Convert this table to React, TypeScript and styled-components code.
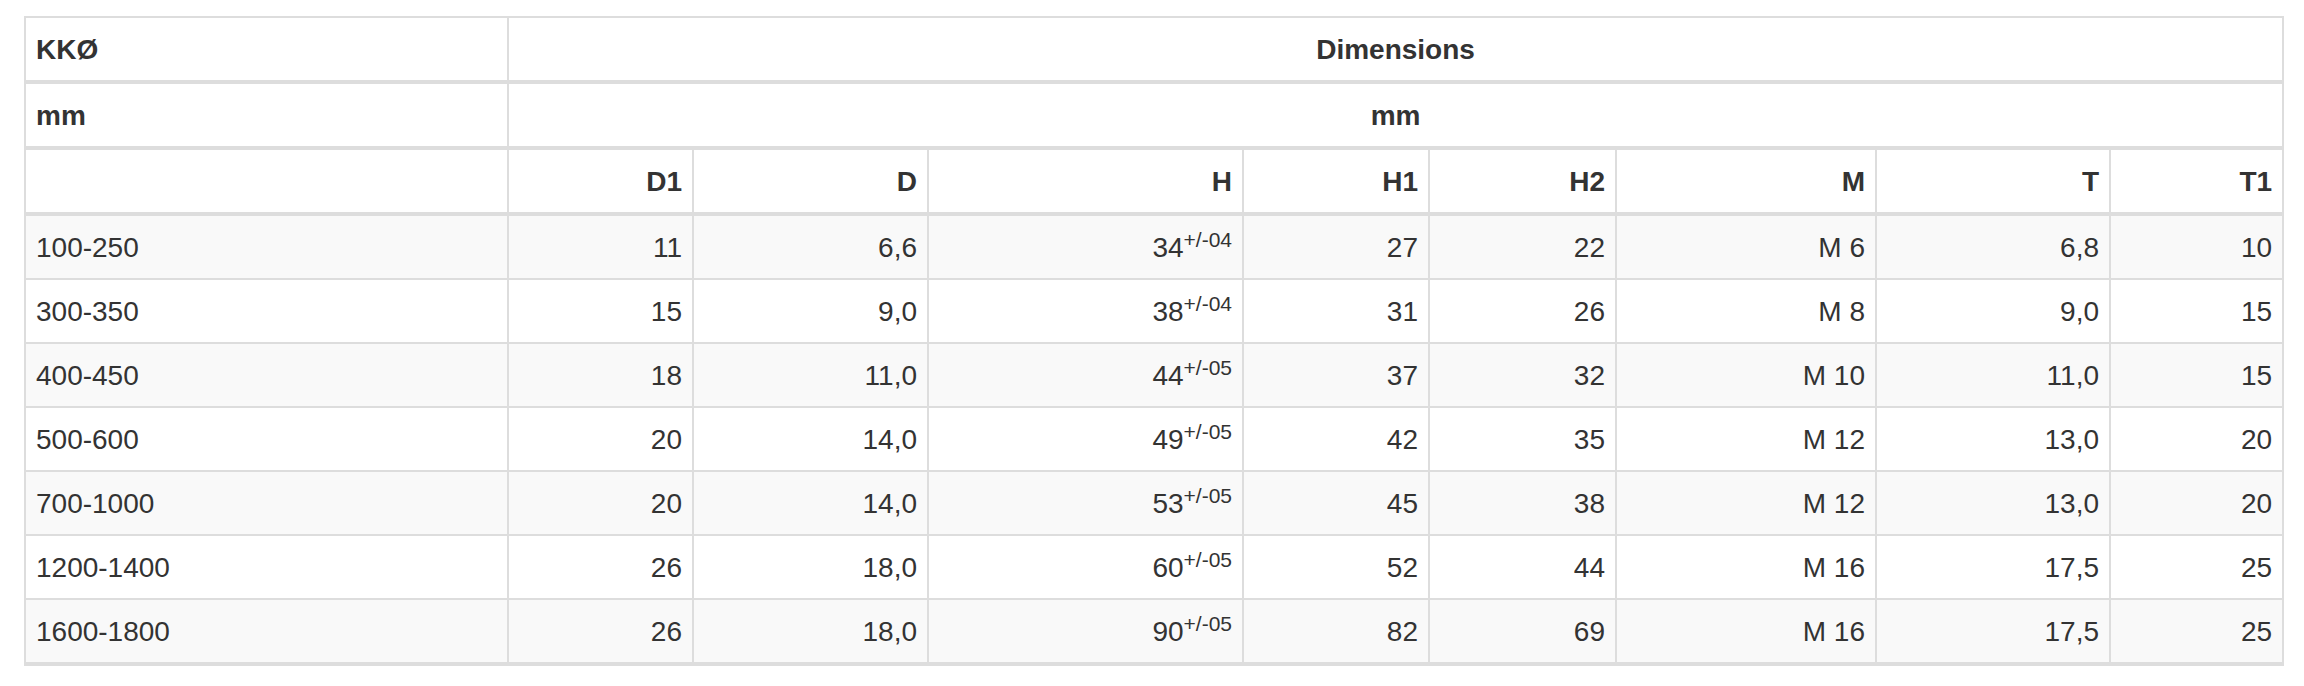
import React from 'react';
import styled, { createGlobalStyle } from 'styled-components';

const GlobalStyle = createGlobalStyle`
  html, body { margin: 0; padding: 0; background: #ffffff; }
  body { font-family: "Liberation Sans", Arial, Helvetica, sans-serif; color: #333333; }
`;

const Page = styled.div`
  padding: 16px 0 0 24px;
`;

const Table = styled.table`
  table-layout: fixed;
  width: 2260px;
  border-collapse: separate;
  border-spacing: 0;
  border-left: 2px solid #dddddd;
  border-top: 2px solid #dddddd;
  font-size: 28px;
  line-height: 42px;
  color: #333333;
`;

type Align = 'left' | 'center' | 'right';

const HeadCell = styled.th<{ $align: Align }>`
  box-sizing: border-box;
  padding: 11px 10px 9px;
  font-weight: bold;
  text-align: ${(p) => p.$align};
  border-right: 2px solid #dddddd;
  border-bottom: 4px solid #dddddd;
  white-space: nowrap;
`;

const BodyRow = styled.tr<{ $striped: boolean }>`
  background: ${(p) => (p.$striped ? '#f9f9f9' : '#ffffff')};

  &:last-child > td {
    border-bottom-width: 4px;
  }
`;

const Cell = styled.td<{ $align: Align }>`
  box-sizing: border-box;
  padding: 11px 10px 9px;
  text-align: ${(p) => p.$align};
  border-right: 2px solid #dddddd;
  border-bottom: 2px solid #dddddd;
  white-space: nowrap;
`;

const Tol = styled.sup`
  font-size: 75%;
  line-height: 0;
  position: relative;
  vertical-align: baseline;
  top: -0.5em;
`;

const widths = [483, 185, 235, 315, 186, 187, 260, 234, 173];
const subHeads = ['D1', 'D', 'H', 'H1', 'H2', 'M', 'T', 'T1'];

type Row = {
  range: string;
  d1: string;
  d: string;
  h: string;
  tol: string;
  h1: string;
  h2: string;
  m: string;
  t: string;
  t1: string;
};

const rows: Row[] = [
  { range: '100-250', d1: '11', d: '6,6', h: '34', tol: '+/-04', h1: '27', h2: '22', m: 'M 6', t: '6,8', t1: '10' },
  { range: '300-350', d1: '15', d: '9,0', h: '38', tol: '+/-04', h1: '31', h2: '26', m: 'M 8', t: '9,0', t1: '15' },
  { range: '400-450', d1: '18', d: '11,0', h: '44', tol: '+/-05', h1: '37', h2: '32', m: 'M 10', t: '11,0', t1: '15' },
  { range: '500-600', d1: '20', d: '14,0', h: '49', tol: '+/-05', h1: '42', h2: '35', m: 'M 12', t: '13,0', t1: '20' },
  { range: '700-1000', d1: '20', d: '14,0', h: '53', tol: '+/-05', h1: '45', h2: '38', m: 'M 12', t: '13,0', t1: '20' },
  { range: '1200-1400', d1: '26', d: '18,0', h: '60', tol: '+/-05', h1: '52', h2: '44', m: 'M 16', t: '17,5', t1: '25' },
  { range: '1600-1800', d1: '26', d: '18,0', h: '90', tol: '+/-05', h1: '82', h2: '69', m: 'M 16', t: '17,5', t1: '25' },
];

export default function App() {
  return (
    <Page>
      <GlobalStyle />
      <Table>
        <colgroup>
          {widths.map((w, i) => (
            <col key={i} style={{ width: w }} />
          ))}
        </colgroup>
        <thead>
          <tr>
            <HeadCell $align="left">KKØ</HeadCell>
            <HeadCell $align="center" colSpan={8}>Dimensions</HeadCell>
          </tr>
          <tr>
            <HeadCell $align="left">mm</HeadCell>
            <HeadCell $align="center" colSpan={8}>mm</HeadCell>
          </tr>
          <tr>
            <HeadCell $align="left" />
            {subHeads.map((h) => (
              <HeadCell key={h} $align="right">{h}</HeadCell>
            ))}
          </tr>
        </thead>
        <tbody>
          {rows.map((r, i) => (
            <BodyRow key={r.range} $striped={i % 2 === 0}>
              <Cell $align="left">{r.range}</Cell>
              <Cell $align="right">{r.d1}</Cell>
              <Cell $align="right">{r.d}</Cell>
              <Cell $align="right">
                {r.h}
                <Tol>{r.tol}</Tol>
              </Cell>
              <Cell $align="right">{r.h1}</Cell>
              <Cell $align="right">{r.h2}</Cell>
              <Cell $align="right">{r.m}</Cell>
              <Cell $align="right">{r.t}</Cell>
              <Cell $align="right">{r.t1}</Cell>
            </BodyRow>
          ))}
        </tbody>
      </Table>
    </Page>
  );
}
